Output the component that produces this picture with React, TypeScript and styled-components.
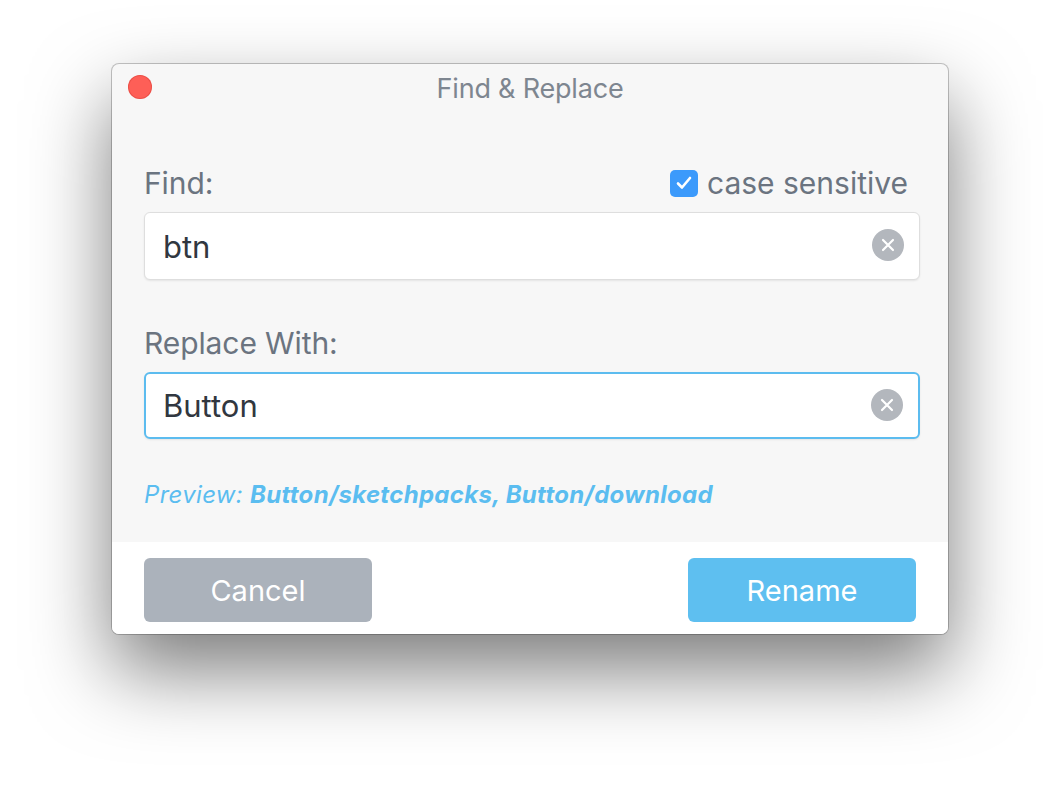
import { createGlobalStyle, styled } from "styled-components";

const GlobalStyle = createGlobalStyle`
    html, body {
        margin: 0;
        padding: 0;
        background: #ffffff;
        font-family: Inter, "Noto Sans", "DejaVu Sans", sans-serif;
    }
`;

const Stage = styled.div`
    width: 1060px;
    height: 794px;
    padding: 64px 0 0 112px;
    box-sizing: border-box;
    overflow: hidden;
`;

const Window = styled.div`
    width: 836px;
    height: 570px;
    display: flex;
    flex-direction: column;
    border-radius: 7px;
    overflow: hidden;
    background: #f7f7f7;
    box-shadow: 0 36px 80px rgba(0, 0, 0, 0.52), 0 0 0 1px rgba(0, 0, 0, 0.22);
`;

const TitleBar = styled.div`
    height: 48px;
    display: grid;
    grid-template-columns: 1fr auto 1fr;
    align-items: center;
    padding: 0 16px;
`;

const CloseDot = styled.div`
    width: 24px;
    height: 24px;
    border-radius: 50%;
    background: #fe5f57;
    box-shadow: inset 0 0 0 1px rgba(200, 50, 40, 0.35);
    margin-top: -2px;
`;

const Title = styled.div`
    font-size: 27px;
    color: #7e8690;
    letter-spacing: -0.2px;
`;

const Body = styled.div`
    flex: 1;
    display: flex;
    flex-direction: column;
    padding: 54px 28px 0 32px;
`;

const LabelRow = styled.div<{ $gap: number }>`
    height: 34px;
    display: flex;
    align-items: center;
    justify-content: space-between;
    margin-bottom: 12px;
    margin-top: ${(p) => p.$gap}px;
`;

const Label = styled.span`
    font-size: 30px;
    color: #6b7480;
    letter-spacing: -0.1px;
`;

const CheckWrap = styled.label`
    display: flex;
    align-items: center;
    gap: 9px;
    font-size: 30px;
    color: #6b7480;
    margin-right: 12px;
`;

const CheckBox = styled.span`
    width: 28px;
    height: 27px;
    border-radius: 5px;
    background: #3c9afb;
    display: flex;
    align-items: center;
    justify-content: center;
`;

const Field = styled.div<{ $focus?: boolean }>`
    height: ${(p) => (p.$focus ? 67 : 68)}px;
    display: flex;
    align-items: center;
    justify-content: space-between;
    background: #ffffff;
    border-radius: 6px;
    box-sizing: border-box;
    padding: 0 15px 0 ${(p) => (p.$focus ? 17 : 18)}px;
    border: ${(p) => (p.$focus ? "2px solid #5cbcef" : "1px solid #dedede")};
    box-shadow: 0 1px 2px rgba(0, 0, 0, 0.08);
`;

const FieldText = styled.span`
    font-size: 31px;
    color: #313740;
`;

const ClearButton = styled.span`
    width: 32px;
    height: 32px;
    border-radius: 50%;
    background: #b3b7bd;
    display: flex;
    align-items: center;
    justify-content: center;
    margin-top: -2px;
`;

const Preview = styled.div`
    margin-top: 43px;
    height: 26px;
    line-height: 26px;
    font-size: 24px;
    letter-spacing: 0.3px;
    font-style: italic;
    color: #5bbdf0;

    b {
        font-weight: 700;
    }
`;

const Footer = styled.div`
    height: 92px;
    background: #ffffff;
    display: flex;
    justify-content: space-between;
    padding: 16px 32px 0 32px;
    box-sizing: border-box;
`;

const Button = styled.button<{ $primary?: boolean }>`
    width: 228px;
    height: 64px;
    border: none;
    border-radius: 6px;
    font-family: inherit;
    font-size: 29px;
    color: #ffffff;
    background: ${(p) => (p.$primary ? "#5ebff0" : "#abb2bb")};
`;

function ClearIcon() {
    return (
        <ClearButton>
            <svg width="14" height="14" viewBox="0 0 14 14">
                <path d="M2 2L12 12M12 2L2 12" stroke="#ffffff" strokeWidth="2.2" strokeLinecap="round" />
            </svg>
        </ClearButton>
    );
}

export default function App() {
    return (
        <>
            <GlobalStyle />
            <Stage>
                <Window>
                    <TitleBar>
                        <CloseDot />
                        <Title>Find &amp; Replace</Title>
                        <span />
                    </TitleBar>
                    <Body>
                        <LabelRow $gap={0}>
                            <Label>Find:</Label>
                            <CheckWrap>
                                <CheckBox>
                                    <svg width="18" height="16" viewBox="0 0 18 16">
                                        <path d="M3 8.5L7 12.5L15 3" fill="none" stroke="#ffffff" strokeWidth="2.6" strokeLinecap="round" strokeLinejoin="round" />
                                    </svg>
                                </CheckBox>
                                case sensitive
                            </CheckWrap>
                        </LabelRow>
                        <Field>
                            <FieldText>btn</FieldText>
                            <ClearIcon />
                        </Field>
                        <LabelRow $gap={46}>
                            <Label>Replace With:</Label>
                        </LabelRow>
                        <Field $focus>
                            <FieldText>Button</FieldText>
                            <ClearIcon />
                        </Field>
                        <Preview>
                            Preview: <b>Button/sketchpacks, Button/download</b>
                        </Preview>
                    </Body>
                    <Footer>
                        <Button>Cancel</Button>
                        <Button $primary>Rename</Button>
                    </Footer>
                </Window>
            </Stage>
        </>
    );
}
